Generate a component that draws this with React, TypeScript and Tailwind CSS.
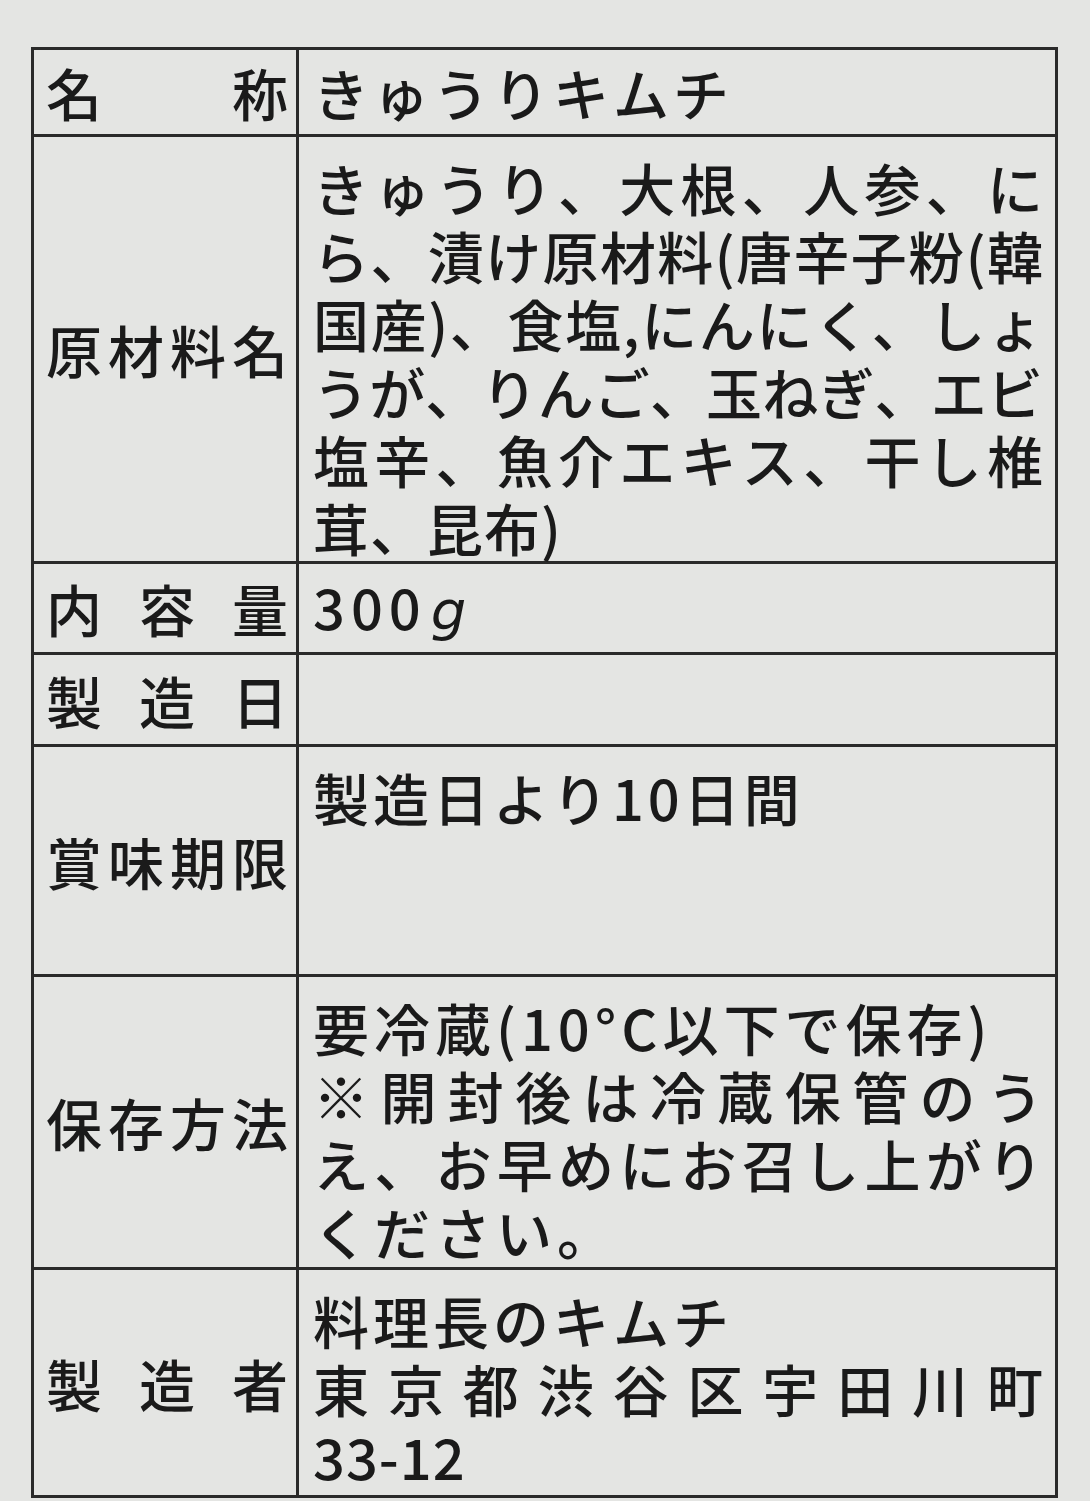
import React from "react";

function J({ text, className = "" }: { text: string; className?: string }) {
  return (
    <div className={"flex w-full justify-between " + className}>
      {Array.from(text).map((c, i) => (
        <span key={i}>{c}</span>
      ))}
    </div>
  );
}

function Row({
  h,
  label,
  children,
  last = false,
  top = false,
}: {
  h: string;
  label: string;
  children: React.ReactNode;
  last?: boolean;
  top?: boolean;
}) {
  return (
    <div className={"flex " + h + (last ? "" : " border-b-[3px] border-[#2a2a2a]")}>
      <div className="flex w-[265px] shrink-0 items-center border-r-[3px] border-[#2a2a2a] pl-[12px] pr-[8px]">
        <J text={label} />
      </div>
      <div
        className={
          "flex flex-1 flex-col pl-[14px] pr-[12px] " +
          (top ? "justify-start pt-[16px]" : "justify-center")
        }
      >
        {children}
      </div>
    </div>
  );
}

export default function App() {
  return (
    <div className="min-h-[1501px] w-[1090px] overflow-hidden bg-[#e4e5e3] pt-[47px] pl-[31px] font-['Noto_Sans_CJK_JP',sans-serif] text-[56px] font-medium leading-[68px] text-[#1a1a1a]">
      <div className="w-[1027px] border-[3px] border-[#2a2a2a]">
        <Row h="h-[87px]" label="名称">
          <div className="tracking-[4px]">きゅうりキムチ</div>
        </Row>
        <Row h="h-[427px]" label="原材料名" top>
          <J text="きゅうり、大根、人参、に" />
          <J text="ら、漬け原材料(唐辛子粉(韓" />
          <J text="国産)、食塩,にんにく、しょ" />
          <J text="うが、りんご、玉ねぎ、エビ" />
          <J text="塩辛、魚介エキス、干し椎" />
          <div className="tracking-[1px]">茸、昆布)</div>
        </Row>
        <Row h="h-[91px]" label="内容量">
          <div className="tracking-[6px]">
            300<span className="ml-[4px] font-['DejaVu_Sans',sans-serif] font-normal italic">g</span>
          </div>
        </Row>
        <Row h="h-[92px]" label="製造日">
          <div></div>
        </Row>
        <Row h="h-[230px]" label="賞味期限" top>
          <div className="tracking-[4px]">製造日より10日間</div>
        </Row>
        <Row h="h-[293px]" label="保存方法" top>
          <div className="tracking-[5px]">要冷蔵(10°C以下で保存)</div>
          <J text="※開封後は冷蔵保管のう" />
          <J text="え、お早めにお召し上がり" />
          <div className="tracking-[5px]">ください。</div>
        </Row>
        <Row h="h-[225px]" label="製造者" last top>
          <div className="tracking-[4px]">料理長のキムチ</div>
          <J text="東京都渋谷区宇田川町" />
          <div className="tracking-[1px]">33-12</div>
        </Row>
      </div>
    </div>
  );
}
